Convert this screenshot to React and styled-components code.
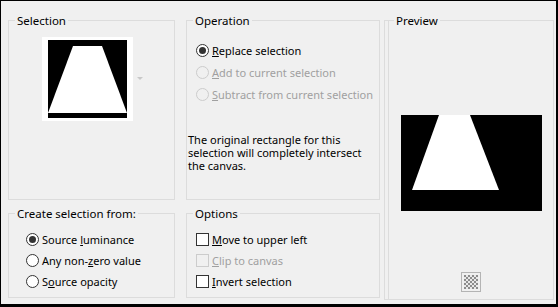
import React from "react";
import styled, { createGlobalStyle } from "styled-components";

const Global = createGlobalStyle`
  html, body { margin: 0; padding: 0; background: #f0f0f0; }
  body { font-family: "Noto Sans", "Open Sans", sans-serif; font-size: 11px; color: #000; }
`;

const Window = styled.div`
  box-sizing: border-box;
  width: 558px;
  height: 307px;
  background: #f0f0f0;
  border-top: 1px solid #000;
  border-left: 1px solid #000;
  border-right: 2px solid #000;
  border-bottom: 3px solid #000;
  display: flex;
  padding: 12px 0 0 7px;
`;

const Controls = styled.div`
  display: grid;
  grid-template-columns: 167px 194px;
  grid-template-rows: 187px 92px;
  column-gap: 11px;
  row-gap: 6px;
`;

const Group = styled.fieldset`
  margin: 0;
  padding: 0;
  border: 1px solid #dcdcdc;
  min-width: 0;
  position: relative;
`;

const PreviewGroup = styled(Group)`
  margin-left: 4px;
  width: 170px;
  height: 287px;
  box-sizing: border-box;
`;

const Title = styled.legend`
  padding: 0 2px;
  margin-left: ${(p) => p.$indent || 6}px;
  line-height: 15px;
  font-size: 11.5px;
`;

const Thumb = styled.div`
  margin: 9px 0 0 33px;
  width: 91px;
  height: 84px;
  background: #fff;
  display: flex;
  align-items: flex-start;
  justify-content: center;
  padding-top: 3px;
  box-sizing: border-box;
  position: relative;
`;

const Caret = styled.div`
  position: absolute;
  left: 95px;
  top: 40px;
  width: 0;
  height: 0;
  border-left: 3px solid transparent;
  border-right: 3px solid transparent;
  border-top: 3px solid #c8c8c8;
`;

const List = styled.div`
  display: flex;
  flex-direction: column;
  gap: ${(p) => p.$gap || 9}px;
  padding: ${(p) => p.$pad || "0"};
`;

const Row = styled.label`
  display: flex;
  align-items: center;
  gap: 3px;
  height: 13px;
  line-height: 13px;
  white-space: nowrap;
  color: ${(p) => (p.$disabled ? "#a0a0a0" : "#000")};
`;

const RadioDot = styled.span`
  box-sizing: border-box;
  width: 13px;
  height: 13px;
  border-radius: 50%;
  border: 1px solid ${(p) => (p.$disabled ? "#cccccc" : "#333")};
  background: ${(p) => (p.$disabled ? "#f0f0f0" : "#fff")};
  display: flex;
  align-items: center;
  justify-content: center;
  flex: none;
  &::after {
    content: "";
    width: 7px;
    height: 7px;
    border-radius: 50%;
    background: #333;
    display: ${(p) => (p.$checked ? "block" : "none")};
  }
`;

const Box = styled.span`
  box-sizing: border-box;
  width: 13px;
  height: 13px;
  border: 1px solid ${(p) => (p.$disabled ? "#cccccc" : "#333")};
  background: ${(p) => (p.$disabled ? "#f0f0f0" : "#fff")};
  flex: none;
`;

const U = styled.u`
  text-decoration: underline;
  text-underline-offset: 1px;
`;

const Note = styled.p`
  margin: 32px 0 0 1px;
  line-height: 13px;
  width: 190px;
`;

const PreviewInner = styled.div`
  position: absolute;
  inset: -8px 0 0 3px;
  border-left: 1px solid #dcdcdc;
  display: flex;
  flex-direction: column;
  align-items: center;
`;

const PreviewImg = styled.div`
  margin-top: 95px;
  width: 141px;
  height: 96px;
  background: #000;
`;

const Checker = styled.div`
  margin-top: 61px;
  width: 20px;
  height: 20px;
  box-sizing: border-box;
  border: 1px solid #b4b4b4;
  padding: 2px;
`;

const Radio = ({ checked, disabled, children }) => (
  <Row $disabled={disabled}>
    <RadioDot $checked={checked} $disabled={disabled} />
    <span>{children}</span>
  </Row>
);

const Check = ({ disabled, children }) => (
  <Row $disabled={disabled}>
    <Box $disabled={disabled} />
    <span>{children}</span>
  </Row>
);

export default function App() {
  return (
    <>
      <Global />
      <Window>
        <Controls>
          <Group>
            <Title>Selection</Title>
            <Thumb>
              <svg width="79" height="78" viewBox="0 0 79 78">
                <rect width="79" height="78" fill="#000" />
                <polygon points="25,6 54,6 79,73 0,73" fill="#fff" />
              </svg>
              <Caret />
            </Thumb>
          </Group>

          <Group>
            <Title>Operation</Title>
            <List $pad="16px 0 0 9px" $gap={9}>
              <Radio checked>
                <U>R</U>eplace selection
              </Radio>
              <Radio disabled>
                <U>A</U>dd to current selection
              </Radio>
              <Radio disabled>
                <U>S</U>ubtract from current selection
              </Radio>
            </List>
            <Note>
              The original rectangle for this selection will completely intersect
              the canvas.
            </Note>
          </Group>

          <Group>
            <Title>Create selection from:</Title>
            <List $pad="12px 0 0 17px" $gap={8}>
              <Radio checked>
                Source <U>l</U>uminance
              </Radio>
              <Radio>
                Any non-<U>z</U>ero value
              </Radio>
              <Radio>
                S<U>o</U>urce opacity
              </Radio>
            </List>
          </Group>

          <Group>
            <Title>Options</Title>
            <List $pad="12px 0 0 9px" $gap={8}>
              <Check>
                <U>M</U>ove to upper left
              </Check>
              <Check disabled>
                <U>C</U>lip to canvas
              </Check>
              <Check>
                <U>I</U>nvert selection
              </Check>
            </List>
          </Group>
        </Controls>

        <PreviewGroup>
          <Title $indent={9}>Preview</Title>
          <PreviewInner>
            <PreviewImg>
              <svg width="141" height="96" viewBox="0 0 141 96">
                <polygon points="38,0 69,0 98,75 11,75" fill="#fff" />
              </svg>
            </PreviewImg>
            <Checker>
              <svg width="14" height="14" viewBox="0 0 14 14">
                <rect width="14" height="14" fill="#e8e8e8" />
                {[0, 1, 2, 3, 4, 5, 6].map((r) =>
                  [0, 1, 2, 3, 4, 5, 6].map((c) =>
                    (r + c) % 2 === 0 ? (
                      <rect key={`${r}-${c}`} x={c * 2} y={r * 2} width="2" height="2" fill="#8c8c8c" />
                    ) : null
                  )
                )}
              </svg>
            </Checker>
          </PreviewInner>
        </PreviewGroup>
      </Window>
    </>
  );
}
